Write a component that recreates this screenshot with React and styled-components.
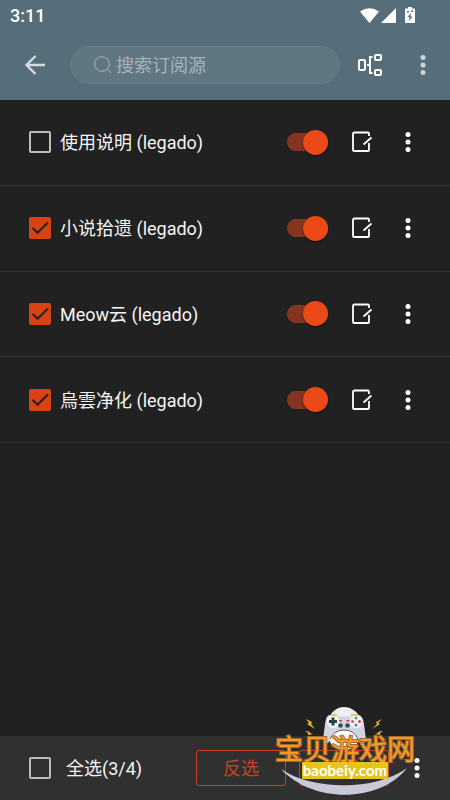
import React, { useState } from "react";
import styled, { createGlobalStyle } from "styled-components";

const GlobalStyle = createGlobalStyle`
  * { box-sizing: border-box; }
  body {
    margin: 0;
    background: #212121;
    color: #f5f5f5;
    font-family: Roboto, "Noto Sans CJK SC", sans-serif;
    font-size: 18px;
    line-height: 24px;
  }
  button, input { font: inherit; color: inherit; }
`;

const Page = styled.div`
  min-height: 100vh;
  display: flex;
  flex-direction: column;
`;

const Header = styled.header`
  background: #566e7a;
`;

const StatusBar = styled.div`
  display: flex;
  align-items: center;
  justify-content: space-between;
  height: 30px;
  padding: 2px 34px 0 10px;
  font-weight: 500;
  color: #fff;
  svg { display: block; }
`;

const Toolbar = styled.div`
  display: flex;
  align-items: center;
  height: 70px;
  padding: 0 12px 0 20px;
`;

const IconButton = styled.button`
  flex: none;
  display: flex;
  align-items: center;
  justify-content: center;
  width: 30px;
  height: 40px;
  padding: 0;
  border: 0;
  background: none;
  color: ${(p) => p.$color || "#fff"};
  cursor: pointer;
  svg { display: block; }
`;

const ToolbarActions = styled.div`
  display: flex;
  gap: 23px;
`;

const RowActions = styled.div`
  display: flex;
  align-items: center;
  gap: 16px;
`;

const SearchBox = styled.label`
  flex: 1;
  min-width: 0;
  display: flex;
  align-items: center;
  gap: 4px;
  height: 38px;
  margin: 0 15px 0 20px;
  padding: 0 20px 0 23px;
  border: 1px solid #647b86;
  border-radius: 19px;
  background: #607782;
  color: #a6b3b9;
  svg { flex: none; }
`;

const SearchInput = styled.input`
  flex: 1;
  min-width: 0;
  padding: 2px 0 0;
  border: 0;
  outline: 0;
  background: none;
  &::placeholder { color: #a6b3b9; opacity: 1; }
`;

const SourceList = styled.ul`
  display: grid;
  grid-auto-rows: 1fr;
  min-height: 343px;
  margin: 0;
  padding: 0;
  list-style: none;
`;

const SourceRow = styled.li`
  display: flex;
  align-items: center;
  padding: 0 27px 0 29px;
  border-bottom: 1px solid #333;
`;

const CheckLabel = styled.label`
  flex: 1;
  min-width: 0;
  display: flex;
  align-items: center;
  gap: ${(p) => p.$gap || 9}px;
  white-space: nowrap;
  cursor: pointer;
`;

const LabelText = styled.span`
  padding-top: 2px;
`;

const CheckControl = styled.span`
  display: grid;
  flex: none;
  width: 22px;
  height: 22px;
  > * { grid-area: 1 / 1; }
  svg { pointer-events: none; visibility: hidden; }
  input:checked + svg { visibility: visible; }
`;

const CheckInput = styled.input`
  appearance: none;
  width: 22px;
  height: 22px;
  margin: 0;
  border: 2px solid #bcbcbc;
  border-radius: 2px;
  &:checked {
    border-color: #d84315;
    background: #d84315;
  }
`;

const Switch = styled.input`
  appearance: none;
  flex: none;
  display: flex;
  align-items: center;
  width: 41px;
  height: 26px;
  margin: 0 3px 0 0;
  background: linear-gradient(#555, #555) center / 38px 18px no-repeat;
  border-radius: 13px;
  cursor: pointer;
  &::before {
    content: "";
    width: 25px;
    height: 25px;
    border-radius: 50%;
    background: #bdbdbd;
    box-shadow: 0 1px 2px #0008;
  }
  &:checked {
    justify-content: flex-end;
    background: linear-gradient(90deg, #84341f, #84341f) right / 32px 18px no-repeat,
      radial-gradient(circle at 9px 50%, #84341f 9px, transparent 9px);
  }
  &:checked::before { background: #eb4a18; }
`;

const Footer = styled.footer`
  position: relative;
  display: flex;
  align-items: center;
  height: 64px;
  margin-top: auto;
  padding: 0 18px 0 29px;
  background: #303030;
`;

const ActionButton = styled.button`
  flex: none;
  width: 90px;
  height: 36px;
  margin-right: 13px;
  padding: 2px 0 0;
  border: 1px solid #c34522;
  border-radius: 3px;
  background: none;
  color: #c34522;
  cursor: pointer;
`;

const Watermark = styled.div`
  position: absolute;
  right: 33px;
  bottom: 0;
  display: grid;
  justify-items: center;
  width: 144px;
  height: 96px;
  pointer-events: none;
  > * { grid-area: 1 / 1; }
`;

const SiteName = styled.strong`
  margin-top: 27px;
  font: 400 28px/34px "Noto Sans CJK SC", sans-serif;
  color: #f59a24;
  white-space: nowrap;
  -webkit-text-stroke: 2px #a66a30;
  paint-order: stroke;
`;

const SiteAddress = styled.span`
  width: 86px;
  height: 17px;
  margin-top: 58px;
  background: #e5c51d;
  color: #fff;
  font: 700 15px/16px Lato, sans-serif;
  text-align: center;
`;

function MoreIcon() {
  return (
    <svg width="6" height="20" viewBox="0 0 6 20" fill="currentColor">
      <circle cx="3" cy="2.5" r="2.5" />
      <circle cx="3" cy="10" r="2.5" />
      <circle cx="3" cy="17.5" r="2.5" />
    </svg>
  );
}

function EditIcon() {
  return (
    <svg width="22" height="22" viewBox="0 0 22 22" fill="none" stroke="currentColor" strokeWidth="1.800">
      <path d="M18 5V2.500Q18 1.500 17 1.500H3.500Q2 1.500 2 3V19Q2 20 3 20H17Q18 20 18 19V12" />
      <path d="M12.500 13.500L20.500 6.500" />
    </svg>
  );
}

function CheckBox(props) {
  return (
    <CheckControl>
      <CheckInput type="checkbox" {...props} />
      <svg width="22" height="22" viewBox="0 0 22 22" fill="none" stroke="#272321" strokeWidth="2.200">
        <path d="M3.500 10.700L8.500 15.700L19 5.500" />
      </svg>
    </CheckControl>
  );
}

function StatusIcons() {
  return (
    <svg width="56" height="18" viewBox="0 0 56 18" fill="#fff">
      <path d="M0 4.500Q9.500 -2 19 4.500L9.500 16Z" />
      <path d="M36 1V16H21Z" />
      <path d="M48 0H52V1.500H54Q55 1.500 55 2.500V15Q55 16 54 16H46Q45 16 45 15V2.500Q45 1.500 46 1.500H48Z" />
      <path d="M51 6L47.500 10H49.500L49 14L52.500 9.500H50.500ZM47 4H49V5.500H47ZM51 3.500H53V5H51Z" fill="#566e7a" />
    </svg>
  );
}

function GamepadDrawing() {
  return (
    <svg width="144" height="96" viewBox="0 0 144 96">
      <path d="M8 65C40 87 103 87 134 64C107 99 40 100 8 65Z" fill="#c9c9d9" />
      <path d="M56 14C59 7 64 3 71 3C78 3 84 7 87 14V20H56Z" fill="#efefef" />
      <path d="M56 11Q71 14 86 11Q90 12 91 20L93 36Q91 42 86 38L81 31Q71 22 61 31L56 38Q51 42 50 36L52 20Q53 12 56 11Z" fill="#d2d4e2" />
      <ellipse cx="71" cy="36" rx="14" ry="10" fill="#fafafa" />
      <path d="M57 35Q61 26 71 26Q81 26 85 35" fill="none" stroke="#55565d" />
      <circle cx="60" cy="17.500" r="6.500" fill="#f2f3f7" />
      <circle cx="83" cy="17.500" r="6.500" fill="#f2f3f7" />
      <path d="M58 11Q60 9 64 10V12H58ZM78 10Q82 9 85 11V12H78Z" fill="#ecc05b" />
      <path d="M58.500 13.500H61.500V16H64V19H61.500V21.500H58.500V19H56V16H58.500Z" fill="#29434b" />
      <circle cx="83" cy="14" r="1.500" fill="#51a3b8" />
      <circle cx="79.500" cy="17.500" r="1.500" fill="#c95873" />
      <circle cx="86.500" cy="17.500" r="1.500" fill="#d53b46" />
      <circle cx="83" cy="21" r="1.500" fill="#398999" />
      <path d="M66 16H69V17.500H66ZM73.500 16H76.500V17.500H73.500Z" fill="#d53b46" />
      <circle cx="67.500" cy="21.500" r="2.300" fill="#344d58" />
      <circle cx="74.500" cy="21.500" r="2.300" fill="#344d58" />
      <g fill="#efb62a">
        <path d="M33 15L39 18L38 20L42 25L34 20L36 19ZM32 27L36 27.500L37 29L40 30L35 31L35 29ZM109 15L103 18L104 20L99 25L107 20L105 19ZM110 27L106 27.500L105 29L102 30L107 31L107 29Z" />
      </g>
    </svg>
  );
}

const sources = [
  { name: "使用说明 (legado)", selected: false },
  { name: "小说拾遗 (legado)", selected: true },
  { name: "Meow云 (legado)", selected: true },
  { name: "烏雲净化 (legado)", selected: true },
];

export default function App() {
  const [items, setItems] = useState(sources);
  const count = items.filter((item) => item.selected).length;
  const toggle = (index) =>
    setItems(items.map((item, i) => (i === index ? { ...item, selected: !item.selected } : item)));

  return (
    <Page>
      <GlobalStyle />
      <Header>
        <StatusBar>
          <span>3:11</span>
          <StatusIcons />
        </StatusBar>
        <Toolbar>
          <IconButton aria-label="返回" $color="#d5dbde">
            <svg width="20" height="20" viewBox="0 0 20 20" fill="none" stroke="currentColor" strokeWidth="2.400">
              <path d="M20 10H2M10.500 1L1.500 10L10.500 19" />
            </svg>
          </IconButton>
          <SearchBox>
            <svg width="18" height="18" viewBox="0 0 18 18" fill="none" stroke="currentColor">
              <circle cx="8" cy="8" r="7.300" />
              <path d="M13 13L17 17" />
            </svg>
            <SearchInput aria-label="搜索订阅源" placeholder="搜索订阅源" />
          </SearchBox>
          <ToolbarActions>
            <IconButton aria-label="分组">
              <svg width="26" height="24" viewBox="0 0 26 24" fill="none" stroke="currentColor" strokeWidth="2">
                <rect x="2" y="7" width="6" height="10" rx="1" />
                <path d="M15.500 4H13V20H15.500M10 12H13" />
                <rect x="18" y="2" width="6" height="5" rx="1" />
                <rect x="18" y="17" width="6" height="5" rx="1" />
              </svg>
            </IconButton>
            <IconButton aria-label="更多" $color="#ccd4d7">
              <MoreIcon />
            </IconButton>
          </ToolbarActions>
        </Toolbar>
      </Header>
      <SourceList>
        {items.map((item, index) => (
          <SourceRow key={item.name}>
            <CheckLabel>
              <CheckBox checked={item.selected} onChange={() => toggle(index)} />
              <LabelText>{item.name}</LabelText>
            </CheckLabel>
            <RowActions>
              <Switch type="checkbox" role="switch" defaultChecked aria-label={"启用 " + item.name} />
              <IconButton aria-label="编辑"><EditIcon /></IconButton>
              <IconButton aria-label="更多"><MoreIcon /></IconButton>
            </RowActions>
          </SourceRow>
        ))}
      </SourceList>
      <Footer>
        <CheckLabel $gap={15}>
          <CheckBox
            checked={count === items.length}
            onChange={(e) => setItems(items.map((item) => ({ ...item, selected: e.target.checked })))}
          />
          <LabelText>全选({count}/{items.length})</LabelText>
        </CheckLabel>
        <ActionButton onClick={() => setItems(items.map((item) => ({ ...item, selected: !item.selected })))}>
          反选
        </ActionButton>
        <ActionButton onClick={() => setItems(items.filter((item) => !item.selected))}>删除</ActionButton>
        <IconButton aria-label="更多"><MoreIcon /></IconButton>
        <Watermark>
          <GamepadDrawing />
          <SiteName>宝贝游戏网</SiteName>
          <SiteAddress>baobeiy.com</SiteAddress>
        </Watermark>
      </Footer>
    </Page>
  );
}
